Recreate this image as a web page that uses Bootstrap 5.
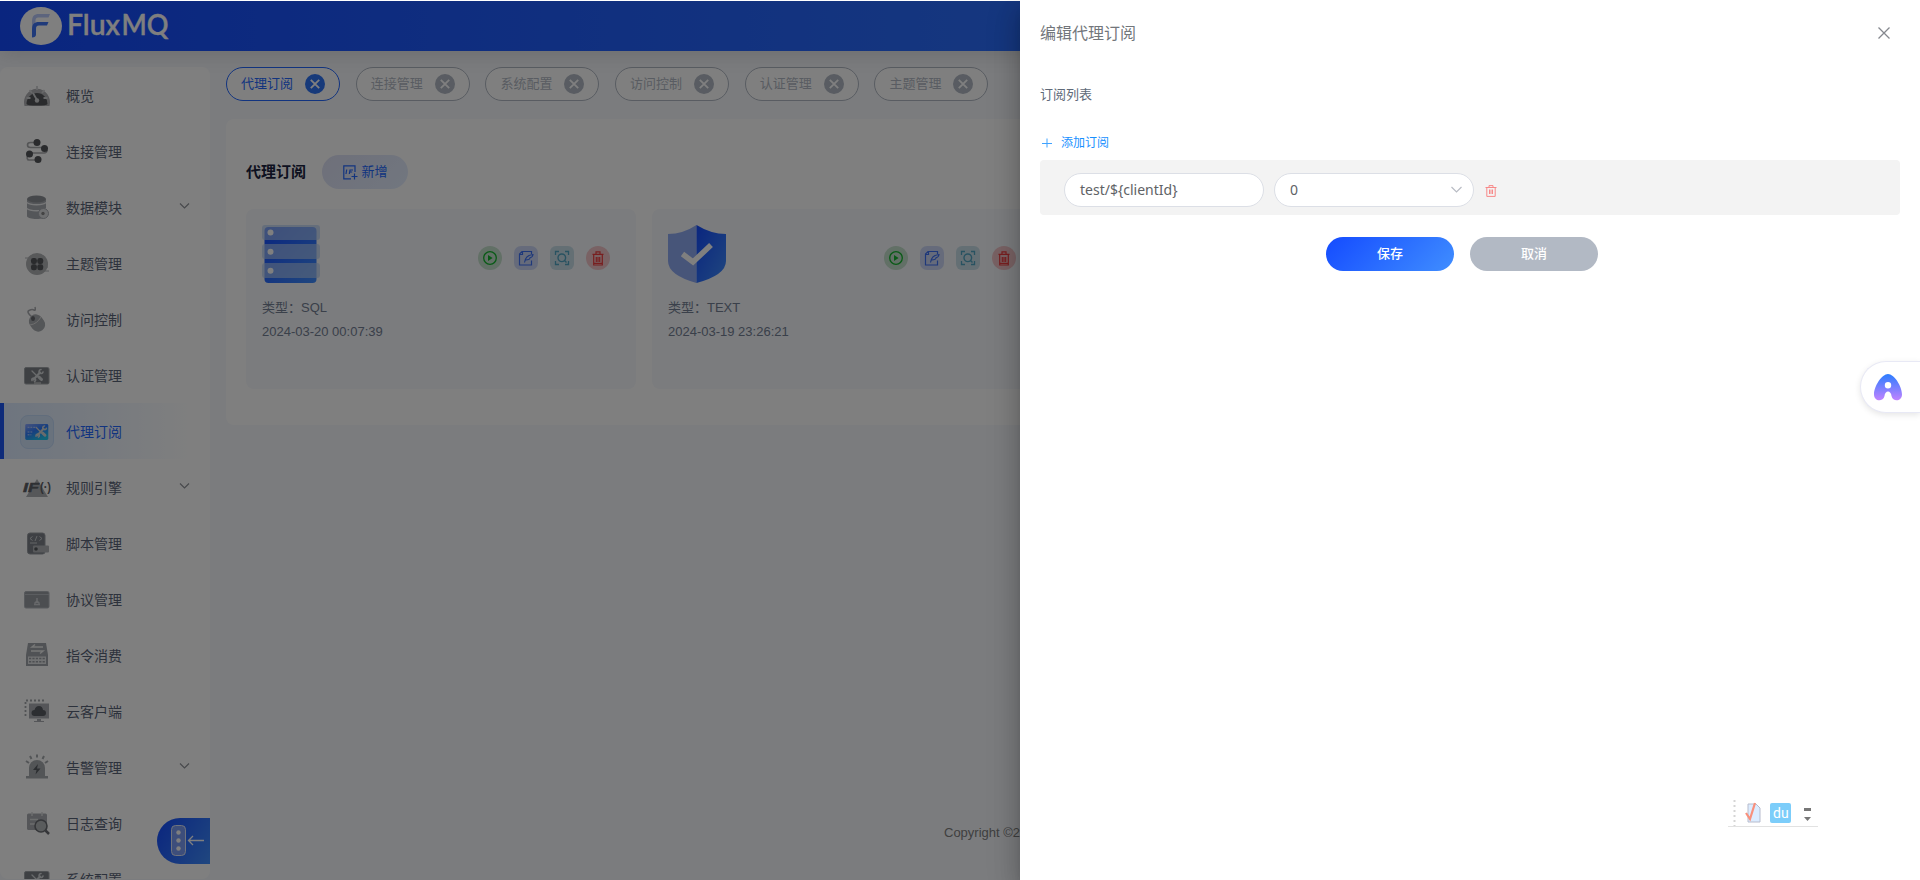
<!DOCTYPE html>
<html lang="zh-CN">
<head>
<meta charset="utf-8">
<meta name="viewport" content="width=device-width, initial-scale=1">
<title>FluxMQ</title>
<link href="https://cdn.jsdelivr.net/npm/bootstrap@5.3.0/dist/css/bootstrap.min.css" rel="stylesheet">
<style>
html,body{height:880px;overflow:hidden}
body{font-family:"Liberation Sans","Noto Sans CJK SC",sans-serif;font-size:13px;background:#fff;padding-top:1px;color:#606a78}
svg{display:block;flex:none}
.shell{height:879px;background:#f6f8fc;overflow:hidden}
.topbar{height:50px;background:linear-gradient(90deg,#144bff,#408eff);box-shadow:0 3px 20px rgba(60,60,60,.16);padding-left:20px;position:relative}
.topbar svg{overflow:visible}
.side{width:210px;height:812px;border-radius:8px;background:#fff;overflow:hidden;margin-top:16px}
.side-item{height:56px;padding:2px 0 0 20px;font-size:14px;color:#5a6478}
.side-item .pic{width:34px;height:34px;margin-right:12px;border-radius:8px}
.side-item .chev{margin:-5px 20px 0 auto}
.side-item.on{background:linear-gradient(90deg,#dceaff,#fff 92%);box-shadow:inset 4px 0 #1c56f5;color:#2468ff}
.side-item.on .pic{background:#d3e4fb;border:1px solid #c2daf8}
.main-col{margin:16px 16px 0;width:1678px}
.tags{gap:15.7px}
.tag{height:34px;width:114px;border:1px solid #b2b9c4;border-radius:17px;background:#fff;color:#b2b9c4;padding:0 14px;font-size:13px}
.tag.on{border-color:#2468ff;color:#2468ff}
.panel{height:306px;margin-top:18px;border-radius:8px;background:#fff;padding:36px 20px 0}
.ttl{font-size:15px;font-weight:600;color:#1b2340}
.add-btn{width:86px;height:34px;border-radius:17px;background:linear-gradient(135deg,#dde0f4,#e4eeff);color:#2468ff;font-size:13px}
.tile{width:390px;height:180px;border-radius:8px;background:#f6f8fc;padding:16px}
.tile p{margin:0;line-height:24px;color:#748094;position:relative;top:1px}
.ops{gap:12px;padding-right:10px;margin-top:8px}
.copy{padding-left:718px;margin-top:398px;line-height:20px;color:#808080}
.mask{position:absolute;left:0;top:1px;width:1920px;height:879px;background:rgba(0,0,0,.5)}
.fold{position:absolute;left:157px;top:818px;width:53px;height:46px;border-radius:23px 0 0 23px;background:linear-gradient(120deg,#144bff,#408eff)}
.drawer-pane{position:absolute;left:1020px;top:0;width:900px;height:880px;background:#fff;padding:20px;box-shadow:0 8px 10px -5px rgba(0,0,0,.2),0 16px 24px 2px rgba(0,0,0,.14),0 6px 30px 5px rgba(0,0,0,.12);font-family:"Noto Sans","Noto Sans CJK SC",sans-serif}
.d-title{font-size:16px;line-height:26px;color:#72767b}
.d-label{font-size:13px;line-height:20px;margin-top:38px}
.d-add{font-size:12px;line-height:20px;margin-top:29px;color:#1890ff}
.sub-row{height:55px;margin-top:7px;border-radius:4px;background:#f3f3f3;padding:13px 0 0 24px}
.field{width:200px;height:34px;border:1px solid #dcdfe6;border-radius:17px;background:#fff;padding:0 11px 1px 15px;font-size:14px;color:#606266}
.pill-btn{width:128px;height:34px;border-radius:17px;color:#fff;font-size:13px;font-weight:500;border:0}
.save{background:linear-gradient(135deg,#144bff,#408eff)}
.cancel{background:#b2b9c4}
.btns{gap:16px;margin:22px 0 0 -16px}
.helper{position:absolute;left:1860px;top:361px;width:60px;height:52px;border:1px solid #e8e9f5;border-right:0;border-radius:26px 0 0 26px;background:#fff;box-shadow:0 2px 6px rgba(0,0,0,.1);padding-left:13px}
.ime{position:absolute;left:1728px;top:798px;width:90px;height:29px;border-bottom:1px solid #e2e2e2}
</style>
</head>
<body>
<svg width="0" height="0" style="position:absolute"><defs>
<linearGradient id="bl" x1="0" y1="0" x2="1" y2="1"><stop offset="0" stop-color="#144bff"/><stop offset="1" stop-color="#408eff"/></linearGradient>
<linearGradient id="pv" x1="0" y1="0" x2="0" y2="1"><stop offset="0" stop-color="#2b7dff"/><stop offset="1" stop-color="#c183ff"/></linearGradient>
<linearGradient id="cy" x1="0" y1="0" x2=".6" y2="1"><stop offset="0" stop-color="#8fa8ff"/><stop offset=".5" stop-color="#2f7dff"/><stop offset="1" stop-color="#23c8f0"/></linearGradient>
<g id="chev"><path d="M1 1.500 5.500 6 10 1.500" fill="none" stroke="#909399" stroke-width="1.200"/></g>
<g id="x"><circle cx="10" cy="10" r="10"/><path d="M5.800 5.800l8.400 8.400M14.200 5.800l-8.400 8.400" stroke="#fff" stroke-width="1.800"/></g>
<g id="play"><circle cx="12" cy="12" r="12" fill="#c4e0cc"/><circle cx="12" cy="12" r="6.300" fill="none" stroke="#12b52c" stroke-width="1.300"/><path d="M10 9v6l4.600-3z" fill="#12b52c"/></g>
<g id="edit"><rect width="24" height="24" rx="7" fill="#ccd7f6"/><path d="M17.500 14.500v4.500H5.500V8L8 5.500h9.500V8M5.500 8.500H8.500V5.500" fill="none" stroke="#3c70f5" stroke-width="1.200"/><path d="M10.500 16.500c.5-4 3-7.500 8.500-8-.3 2-1.500 3-3 3.300 0 1.700-2 2.200-4.500 2.200" fill="none" stroke="#3c70f5" stroke-width="1.100"/></g>
<g id="scan"><rect width="24" height="24" rx="6" fill="#c9dfe9"/><path d="M5.500 9V5.500H9M15 5.500h3.500V9M18.500 15v3.500H15M9 18.500H5.500V15" fill="none" stroke="#50a4c2" stroke-width="1.300"/><circle cx="11.800" cy="11.800" r="3.800" fill="none" stroke="#50a4c2" stroke-width="1.400"/><path d="M14.500 14.500l2 2" stroke="#50a4c2" stroke-width="1.400"/></g>
<g id="del"><circle cx="12" cy="12" r="12" fill="#f2c4c8"/><path d="M6.500 8.300h11M10 8V5.800h4V8M7.700 8.500V19h8.600V8.500M10.300 11v5M12 11v5M13.700 11v5M8 17.300h8" fill="none" stroke="#f03c3e" stroke-width="1.200"/></g>
<g id="tools" fill="none" stroke="#d3d6d9" stroke-linecap="round"><path d="M13 12l8 8" stroke-width="1.300"/><path d="M20 18l2.500 2.500" stroke-width="3"/><path d="M14.500 20.500l6.500-7" stroke-width="2.200"/><path d="M22 10.500a2 2 0 1 0 2 2.500M15.500 22.500a1.800 1.800 0 1 0-2.500-1" stroke-width="1.600"/></g>
</defs></svg>

<div class="shell">
  <header class="topbar d-flex align-items-center">
    <svg width="150" height="50" viewBox="0 0 150 50"><ellipse cx="21" cy="25" rx="21" ry="19" fill="#fff"/>
      <path d="M12 27v-6c0-6 2-8 7-8h11l-1.500 3.600H19c-3 0-3.500 1-3.500 4L14 27z" fill="#b9c9fb"/><path d="M12 37v-8c0-6 2-8 7-8h9.500l-1.500 3.600H19c-2.500 0-3 1-3 4v5q0 3-4 3z" fill="#3f75f5"/>
      <g font-family="Lato,sans-serif" font-weight="600" font-size="29" fill="#fff" stroke="#fff" stroke-width=".3"><text x="47" y="34" textLength="53" lengthAdjust="spacingAndGlyphs">Flux</text><text x="101.500" y="34" textLength="47" lengthAdjust="spacingAndGlyphs">MQ</text></g></svg>
  </header>
  <div class="d-flex">
    <nav class="side d-flex flex-column">
      <div class="side-item d-flex align-items-center flex-shrink-0"><svg class="pic" viewBox="0 0 34 34"><path d="M4.500 27a13 13.500 0 1 1 25 0z" fill="#b0b1b4"/><path d="M6.500 25a10.500 11 0 1 1 21 0q-1 1.500-10.500 1.500T6.500 25z" fill="#55575a"/><path d="M17 21L13 14M17 7v4M9.500 11l2.500 3M24.500 11L22 14M6.500 19h4M27.500 19h-4" stroke="#cfd0d2" stroke-width="1.800"/><circle cx="17" cy="21.500" r="2.200" fill="#cfd0d2"/></svg>概览</div>
      <div class="side-item d-flex align-items-center flex-shrink-0"><svg class="pic" viewBox="0 0 34 34"><path d="M17 7.500H10.500q-3 0-3 2.500t3 2.500h14M9 18h15q3 0 3-3M8 19q-2 6 1 6h9" fill="none" stroke="#a9aaad" stroke-width="1.600"/><g fill="#55575b"><circle cx="17" cy="7.500" r="3.500"/><circle cx="24.500" cy="13.500" r="3.500"/><circle cx="9.500" cy="19" r="3.500"/><circle cx="18" cy="24.500" r="3.500"/></g></svg>连接管理</div>
      <div class="side-item d-flex align-items-center flex-shrink-0"><svg class="pic" viewBox="0 0 34 34"><path d="M7 8v17c0 4 19 4 19 0V8z" fill="#a9acb2"/><ellipse cx="16.500" cy="8" rx="9.500" ry="3.500" fill="#8d9096"/><path d="M7 11.500c3 3 16 3 19 0M7 17.500c3 3 16 3 19 0" fill="none" stroke="#edeef0" stroke-width="1.500"/><circle cx="23.500" cy="22.500" r="5" fill="#dddfe1" stroke="#a9acb2"/><circle cx="23" cy="22.500" r="1.700" fill="#888"/></svg>数据模块<svg class="chev" width="11" height="8"><use href="#chev"/></svg></div>
      <div class="side-item d-flex align-items-center flex-shrink-0"><svg class="pic" viewBox="0 0 34 34"><circle cx="17" cy="17" r="11" fill="#b0b2b5"/><path d="M5 11h8M7 14h6M22 24h7M20 20h8" stroke="#b0b2b5"/><g fill="#55575b"><rect x="11" y="11" width="5.900" height="5.900" rx="2.200"/><rect x="17.300" y="11" width="5.900" height="5.900" rx="2.200"/><rect x="11" y="17.300" width="5.900" height="5.900" rx="2.200"/><rect x="17.300" y="17.300" width="5.900" height="5.900" rx="2.200"/></g></svg>主题管理</div>
      <div class="side-item d-flex align-items-center flex-shrink-0"><svg class="pic" viewBox="0 0 34 34"><path d="M12 14Q6 9 9 7.500T14 7t1-3" fill="none" stroke="#aaacb0" stroke-width="1.500"/><rect x="10" y="11" width="14" height="18" rx="7" transform="rotate(-36 17 20)" fill="#a9acb0"/><path d="M10 22q7-1 11-8" stroke="#ddd" fill="none"/><ellipse cx="13" cy="15.500" rx="2" ry="2.500" fill="#66696e"/></svg>访问控制</div>
      <div class="side-item d-flex align-items-center flex-shrink-0"><svg class="pic" viewBox="0 0 34 34"><rect x="4.500" y="8.500" width="24.500" height="16.500" rx="1.500" fill="#7d8186" stroke="#a0a4a8"/><use href="#tools" x="-1"/><path d="M14 24h7" stroke="#ddd"/></svg>认证管理</div>
      <div class="side-item on d-flex align-items-center flex-shrink-0"><svg class="pic" viewBox="0 0 34 34"><rect x="4.500" y="8.500" width="24.500" height="17" rx="1.500" fill="url(#cy)"/><path d="M7 12h8M7 17h6M7 20h4" stroke="#c5d6ff" stroke-dasharray="2 1"/><use href="#tools" x="3"/></svg>代理订阅</div>
      <div class="side-item d-flex align-items-center flex-shrink-0"><svg class="pic" viewBox="0 0 34 34"><path d="M17 8l11 18H6z" fill="#acafb2"/><text x="3" y="21" font-family="Liberation Sans" font-weight="700" font-style="italic" font-size="13.500" fill="#5d6066" stroke="#5d6066" stroke-width=".5" textLength="16" lengthAdjust="spacingAndGlyphs">IF</text><text x="20" y="20" font-family="Liberation Sans" font-weight="700" font-size="12" fill="#5d6066" textLength="11" lengthAdjust="spacingAndGlyphs">(·)</text></svg>规则引擎<svg class="chev" width="11" height="8"><use href="#chev"/></svg></div>
      <div class="side-item d-flex align-items-center flex-shrink-0"><svg class="pic" viewBox="0 0 34 34"><rect x="7.500" y="6" width="17.500" height="21" rx="2.500" fill="#7c8188" stroke="#989ca2"/><path d="M12.500 9.500l-2.500 2 2.500 2M19.500 9.500l2.500 2-2.500 2M17 9l-2 5M10 16h7" stroke="#c9cccf" fill="none"/><rect x="13" y="18.500" width="16" height="7" rx="1" fill="#b0b3b7"/><circle cx="16" cy="22" r="1.800" fill="#55585d"/></svg>脚本管理</div>
      <div class="side-item d-flex align-items-center flex-shrink-0"><svg class="pic" viewBox="0 0 34 34"><rect x="4.500" y="8.500" width="24.500" height="16.500" rx="1.500" fill="#999da3" stroke="#b0b4ba"/><path d="M5 11.500h24" stroke="#b6bac0"/><path d="M17 15v3l-2.500 2.500M17 18l2.500 2.500M14 21.500h6" stroke="#ced1d5" fill="none" stroke-width="1.500"/></svg>协议管理</div>
      <div class="side-item d-flex align-items-center flex-shrink-0"><svg class="pic" viewBox="0 0 34 34"><path d="M8 4h18l2 12v11H6V16z" fill="#a0a4aa"/><path d="M23 8H12l3-2.500M11 12h12l-3 2.500" fill="none" stroke="#eee" stroke-width="1.500"/><path d="M8 17.500h18V25H8z" fill="#e3e4e6"/><path d="M9 19.500h16M9 22.800h16" stroke="#9a9ea4" stroke-width="1.500" stroke-dasharray="2.200 1.200"/></svg>指令消费</div>
      <div class="side-item d-flex align-items-center flex-shrink-0"><svg class="pic" viewBox="0 0 34 34"><path d="M5.500 21V5.500H26" fill="none" stroke="#a2a6ab" stroke-width="1.800" stroke-dasharray="2 2"/><rect x="9" y="8.500" width="20" height="15" fill="#aaadb2"/><path d="M17 24h4v2h3v1H14v-1h3z" fill="#aaadb2"/><path d="M14.500 21a3 3 0 0 1 0-6q1-4 4.500-4t4 4a3 3 0 0 1 0 6z" fill="#585c62"/></svg>云客户端</div>
      <div class="side-item d-flex align-items-center flex-shrink-0"><svg class="pic" viewBox="0 0 34 34"><path d="M9 26V17a8 8 0 0 1 16 0v9z" fill="#a6aaae"/><path d="M6 25h22v2.500H6z" fill="#a6aaae"/><path d="M17 3.500v3M10 5l1.500 3M24 5l-1.500 3M6 10l3 2M28 10l-3 2" stroke="#a6aaae" stroke-width="2"/><path d="M18 13l-5 6h3.500l-1 4.500 5-6H17z" fill="#585c62"/></svg>告警管理<svg class="chev" width="11" height="8"><use href="#chev"/></svg></div>
      <div class="side-item d-flex align-items-center flex-shrink-0"><svg class="pic" viewBox="0 0 34 34"><rect x="7" y="6.500" width="20" height="16.500" rx="1.500" fill="#aaadb2"/><path d="M12 5v4M22 5v4M10 12.500h8M10 17h5" stroke="#d8dadb" stroke-width="1.500"/><circle cx="21" cy="19" r="6" fill="#b5b8bb" stroke="#6a6d72" stroke-width="1.600"/><path d="M25.500 23.500l3.500 3.500" stroke="#6a6d72" stroke-width="2.500"/></svg>日志查询</div>
      <div class="side-item d-flex align-items-center flex-shrink-0"><svg class="pic" viewBox="0 0 34 34"><rect x="4.500" y="8.500" width="24.500" height="16.500" rx="1.500" fill="#7d8186" stroke="#a0a4a8"/><use href="#tools" x="-1"/></svg>系统配置</div>
    </nav>
    <main class="main-col">
      <div class="tags d-flex">
        <div class="tag on d-flex align-items-center justify-content-between">代理订阅<svg width="20" height="20" fill="#2f74f5"><use href="#x"/></svg></div>
        <div class="tag d-flex align-items-center justify-content-between">连接管理<svg width="20" height="20" fill="#b2b9c4"><use href="#x"/></svg></div>
        <div class="tag d-flex align-items-center justify-content-between">系统配置<svg width="20" height="20" fill="#b2b9c4"><use href="#x"/></svg></div>
        <div class="tag d-flex align-items-center justify-content-between">访问控制<svg width="20" height="20" fill="#b2b9c4"><use href="#x"/></svg></div>
        <div class="tag d-flex align-items-center justify-content-between">认证管理<svg width="20" height="20" fill="#b2b9c4"><use href="#x"/></svg></div>
        <div class="tag d-flex align-items-center justify-content-between">主题管理<svg width="20" height="20" fill="#b2b9c4"><use href="#x"/></svg></div>
      </div>
      <section class="panel">
        <div class="d-flex align-items-center gap-3"><div class="ttl">代理订阅</div>
          <div class="add-btn d-flex align-items-center justify-content-center gap-1"><svg width="15" height="15" viewBox="0 0 15 15"><path d="M12 7V.8H.8v13H8M11.500 8.500v6M8.500 11.500h6" fill="none" stroke="#2468ff" stroke-width="1.200"/><path d="M3.700 4.500L3 9M6.300 9L7 5h3M7 7h2.200" stroke="#2468ff" stroke-width="1.200" fill="none"/></svg>新增</div></div>
        <div class="d-flex gap-3 mt-3 pt-1">
          <div class="tile"><div class="d-flex justify-content-between">
            <svg width="58" height="58" viewBox="0 0 58 58"><rect x="2.500" y="2" width="52" height="56" rx="4" fill="url(#bl)"/><g fill="#b4cdf3" fill-opacity=".65"><rect width="58" height="15" rx="3"/><rect y="19" width="58" height="15" rx="3"/><rect y="38" width="58" height="15" rx="3"/></g><g fill="#fff"><circle cx="8.500" cy="7.500" r="3"/><circle cx="8.500" cy="26.700" r="3"/><circle cx="8.500" cy="45.800" r="3"/></g></svg>
            <div class="ops d-flex align-items-center"><svg width="24" height="24"><use href="#play"/></svg><svg width="24" height="24"><use href="#edit"/></svg><svg width="24" height="24"><use href="#scan"/></svg><svg width="24" height="24"><use href="#del"/></svg></div></div>
            <p class="mt-2 pt-1">类型：SQL</p><p>2024-03-20 00:07:39</p></div>
          <div class="tile"><div class="d-flex justify-content-between">
            <svg width="58" height="58" viewBox="0 0 58 58"><path d="M28.500 0Q15 9 0 9v27q0 14 28.500 22z" fill="#8faaf3"/><path d="M28.500 0Q43 9 58 9v27q0 14-29.500 22z" fill="url(#bl)"/><path d="M14.500 29l10.500 8 18-17" fill="none" stroke="#fff" stroke-width="5.500"/></svg>
            <div class="ops d-flex align-items-center"><svg width="24" height="24"><use href="#play"/></svg><svg width="24" height="24"><use href="#edit"/></svg><svg width="24" height="24"><use href="#scan"/></svg><svg width="24" height="24"><use href="#del"/></svg></div></div>
            <p class="mt-2 pt-1">类型：TEXT</p><p>2024-03-19 23:26:21</p></div>
        </div>
      </section>
      <div class="copy">Copyright ©2</div>
    </main>
  </div>
</div>
<div class="fold"><svg width="53" height="46"><rect x="14.500" y="7.500" width="14" height="30" rx="4" fill="#7b9cf6" stroke="#dfe6f8"/><g fill="#fff"><circle cx="21.500" cy="14.500" r="2.200"/><circle cx="21.500" cy="22.500" r="2.200"/><circle cx="21.500" cy="30.500" r="2.200"/></g><path d="M36 18l-4.500 4.500L36 27M32 22.500h15" fill="none" stroke="#fff" stroke-width="1.300"/></svg></div>
<div class="mask"></div>

<aside class="drawer-pane">
  <div class="d-flex justify-content-between align-items-center d-title"><span>编辑代理订阅</span><svg width="12" height="12" style="margin-right:10px"><path d="M.5.500l11 11M11.500.500l-11 11" stroke="#85888e" stroke-width="1.300"/></svg></div>
  <div class="d-label">订阅列表</div>
  <div class="d-add d-flex align-items-center"><svg width="14" height="12"><path d="M7 1.500v9M2 6.500h10" stroke="#3fa2ff" fill="none"/></svg><span style="margin-left:7px">添加订阅</span></div>
  <div class="sub-row d-flex">
    <div class="field d-flex align-items-center">test/${clientId}</div>
    <div class="field d-flex align-items-center justify-content-between" style="margin-left:10px">0<svg width="11" height="8"><path d="M.5 1l5 5 5-5" fill="none" stroke="#b9bcc4" stroke-width="1.200"/></svg></div>
    <svg width="12" height="12" style="margin:12px 0 0 11px"><path d="M.5 2.500h11M4 2V.6h4V2M1.800 2.700v8.700h8.400V2.700M4.500 4.500v4.500M6 4.500v4.500M7.500 4.500v4.500" fill="none" stroke="#f78989"/></svg>
  </div>
  <div class="btns d-flex justify-content-center">
    <button class="pill-btn save p-0">保存</button><button class="pill-btn cancel p-0">取消</button>
  </div>
</aside>
<div class="helper d-flex align-items-center"><svg width="28" height="27" viewBox="0 0 28 27"><path fill-rule="evenodd" d="M14 0C20 0 28 12 28 20.500c0 7-9 8-10.500 1.500-.5-6-6.500-6-7 0C9 28.500 0 27.500 0 20.500 0 12 8 0 14 0zm0 8a3.200 3.200 0 1 0 0 6.400A3.200 3.200 0 0 0 14 8z" fill="url(#pv)"/></svg></div>
<div class="ime"><svg width="90" height="28"><path d="M6.500 2v26" stroke="#d5d5d5" stroke-width="2" stroke-dasharray="2 3"/><path d="M20 6h8l4 4v14H20z" fill="#dcecff" stroke="#b7bccd"/><path d="M18 15l4 6 5-16" stroke="#f9907c" stroke-width="2.200" fill="none"/><rect x="42" y="5" width="21" height="20" rx="2" fill="#7ccdfa"/><text x="45" y="20" font-family="Roboto" font-size="14" fill="#fff">du</text><path d="M76 10h7v3h-7zM76 19h7l-3.500 4z" fill="#777"/></svg></div>
<script src="https://cdn.jsdelivr.net/npm/bootstrap@5.3.0/dist/js/bootstrap.bundle.min.js"></script>
</body>
</html>
